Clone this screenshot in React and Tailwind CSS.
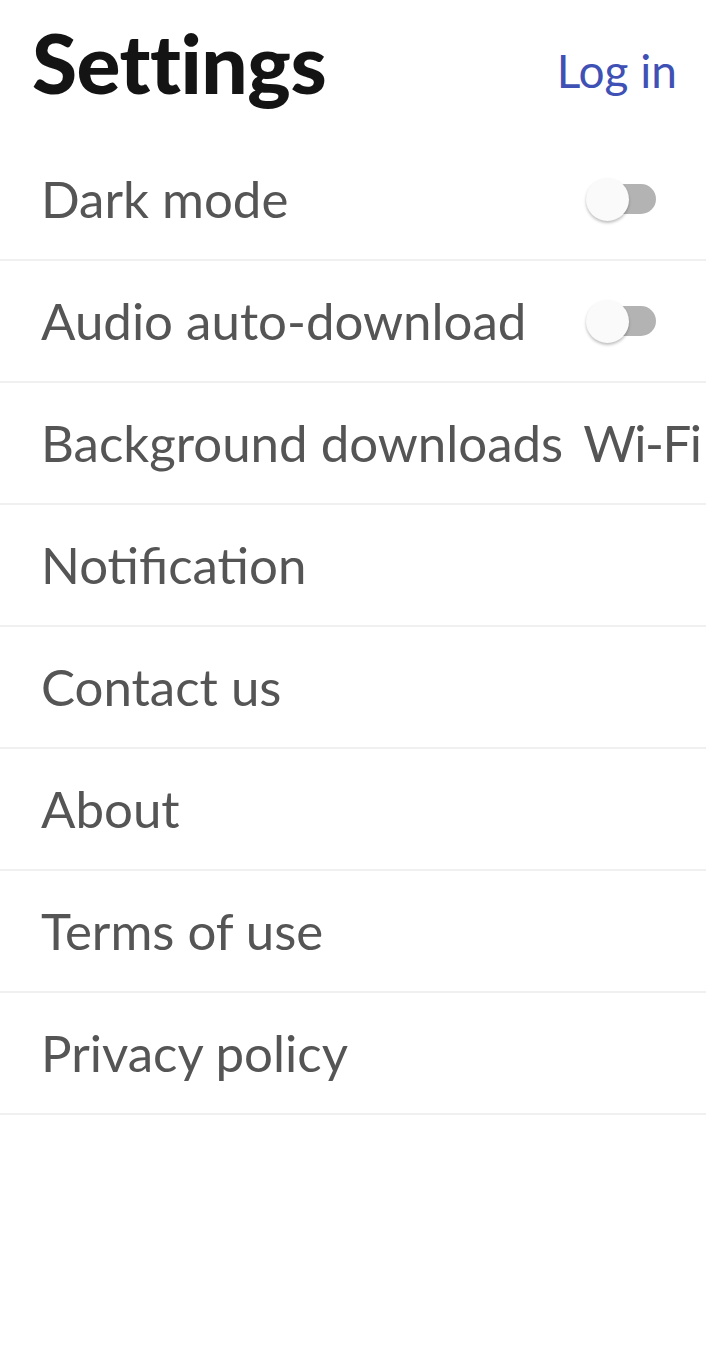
import React, { useState } from "react";

function Toggle({ on, onChange }) {
  return (
    <button
      onClick={onChange}
      className="relative w-[70px] h-[44px] shrink-0 flex items-center"
    >
      <span className="absolute left-[10px] right-0 h-[30px] rounded-full bg-[#b3b3b3]" />
      <span className="absolute left-0 w-[43px] h-[43px] rounded-full bg-[#fafafa] shadow-[0_2px_3px_rgba(0,0,0,0.25)]" />
    </button>
  );
}

export default function App() {
  const [dark, setDark] = useState(false);
  const [audio, setAudio] = useState(false);

  const rows = [
    { label: "Dark mode", right: <Toggle on={dark} onChange={() => setDark(!dark)} /> },
    { label: "Audio auto-download", right: <Toggle on={audio} onChange={() => setAudio(!audio)} /> },
    { label: "Background downloads", right: <span className="shrink-0 whitespace-nowrap tracking-[-1.5px]">Wi-Fi</span> },
    { label: "Notification" },
    { label: "Contact us" },
    { label: "About" },
    { label: "Terms of use" },
    { label: "Privacy policy" },
  ];

  return (
    <div className="w-[706px] min-h-[1363px] bg-white overflow-hidden" style={{ fontFamily: "Lato, 'Open Sans', sans-serif" }}>
      <div className="h-[139px] flex items-start justify-between pl-[32px] pr-[29px]">
        <h1 className="text-[82px] font-black text-[#141414] leading-none mt-[21px] tracking-[-0.5px]">Settings</h1>
        <button className="text-[46px] text-[#3f51b5] leading-none mt-[48px]">Log in</button>
      </div>
      <div>
        {rows.map((r) => (
          <div
            key={r.label}
            className="h-[122px] flex items-center justify-between gap-[20px] pl-[41px] pr-[50px] border-b-2 border-[#f0f0f0] text-[51px] text-[#555555] whitespace-nowrap"
          >
            <span className="shrink-0">{r.label}</span>
            {r.right}
          </div>
        ))}
      </div>
    </div>
  );
}
